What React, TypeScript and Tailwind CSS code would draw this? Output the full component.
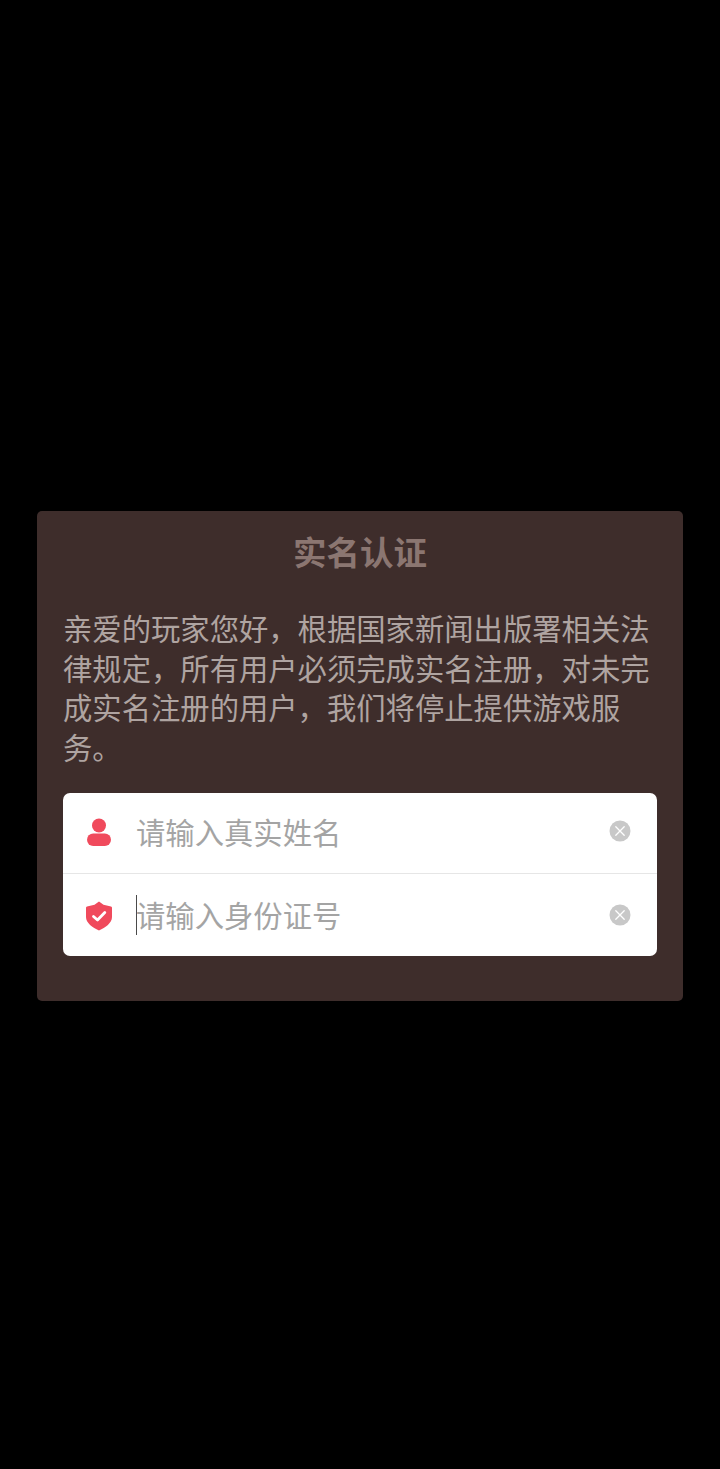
const cjk = "font-['Noto_Sans_CJK_SC',sans-serif]";

const intro =
  "亲爱的玩家您好\uFF0C根据国家新闻出版署相关法律规定\uFF0C所有用户必须完成实名注册\uFF0C对未完成实名注册的用户\uFF0C我们将停止提供游戏服务\u3002";

function UserIcon() {
  return (
    <svg width="26" height="30" viewBox="0 0 26 30" className="block">
      <circle cx="13" cy="8.5" r="7" fill="#f04a5c" />
      <rect x="1" y="16.5" width="24" height="12.5" rx="6.2" fill="#f04a5c" />
    </svg>
  );
}

function ShieldIcon() {
  return (
    <svg width="28" height="30" viewBox="0 0 28 30" className="block">
      <path d="M14 0.5 L18.5 3.8 L26 5.5 Q27 5.7 27 6.8 V16 C27 22 20.5 26.5 14 29.5 C7.5 26.5 1 22 1 16 V6.8 Q1 5.7 2 5.5 L9.5 3.8 Z" fill="#f04a5c" />
      <path d="M8.5 15.5 L12.5 19 L19.8 11.5" fill="none" stroke="#ffffff" strokeWidth="2.8" strokeLinecap="round" strokeLinejoin="round" />
    </svg>
  );
}

function ClearIcon() {
  return (
    <svg width="22" height="22" viewBox="0 0 22 22" className="block">
      <circle cx="11" cy="11" r="10.5" fill="#c8c8c8" />
      <path d="M6.8 6.8 L15.2 15.2 M15.2 6.8 L6.8 15.2" stroke="#ffffff" strokeWidth="1.3" strokeLinecap="round" />
    </svg>
  );
}

export default function App() {
  return (
    <div lang="zh-CN" className={`w-[720px] h-[1469px] bg-black pt-[511px] pl-[37px] ${cjk}`}>
      <div className="w-[646px] h-[490px] bg-[#3e2d2b] rounded-[5px] px-[26px] pt-[19px]">
        <h1 className="text-center text-[33.5px] leading-[42px] font-bold text-[#8b7671]">实名认证</h1>
        <p className="mt-[36px] text-[29.33px] leading-[39.5px] text-[#afa4a1]">{intro}</p>
        <div className="mt-[27px] w-[594px] h-[163px] bg-white rounded-[7px] flex flex-col">
          <div className="h-[81px] flex items-center pl-[22px] pr-[26px] pb-[4px] border-b border-[#e6e6e6]">
            <div className="w-[28px] mt-[2px] flex justify-center"><UserIcon /></div>
            <span className="ml-[23px] flex-1 text-[29.33px] leading-[40px] text-[#a4a4a4]">请输入真实姓名</span>
            <ClearIcon />
          </div>
          <div className="flex-1 flex items-center pl-[22px] pr-[26px]">
            <div className="w-[28px] mt-[2px] flex justify-center"><ShieldIcon /></div>
            <div className="ml-[23px] w-px h-[40px] bg-[#4a4a4a]" />
            <span className="-ml-px mb-[2px] flex-1 text-[29.33px] leading-[40px] text-[#a4a4a4]">请输入身份证号</span>
            <ClearIcon />
          </div>
        </div>
      </div>
    </div>
  );
}
